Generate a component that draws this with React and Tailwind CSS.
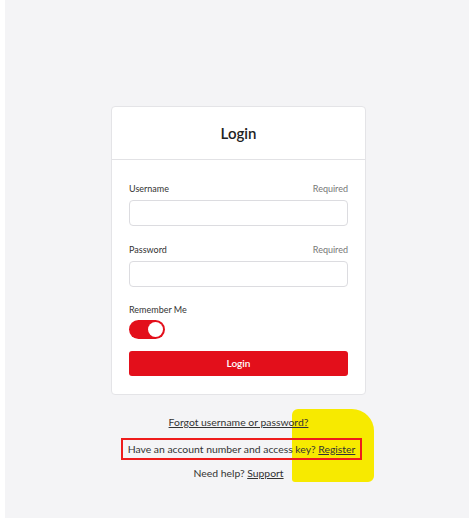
export default function App() {
  return (
    <div className="h-[526px] w-[474px] bg-white font-['Lato',sans-serif]">
      <div className="relative mx-[5px] h-[518px] bg-[#f4f4f6] pt-[106px]">
        <div className="ml-[106px] w-[255px] rounded-[4px] border border-[#e4e4e7] bg-white">
          <div className="flex h-[53px] items-center justify-center border-b border-[#e2e2e5]">
            <h1 className="text-[15px] font-semibold text-[#222]">Login</h1>
          </div>
          <div className="px-[17px] pb-[18px] pt-[23px]">
            <div className="flex items-center justify-between text-[9px] leading-[12px]">
              <span className="text-[#333]">Username</span>
              <span className="text-[#777]">Required</span>
            </div>
            <input className="mt-[5px] block h-[26px] w-full rounded-[4px] border border-[#dcdce0] bg-white" />

            <div className="mt-[18px] flex items-center justify-between text-[9px] leading-[12px]">
              <span className="text-[#333]">Password</span>
              <span className="text-[#777]">Required</span>
            </div>
            <input type="password" className="mt-[5px] block h-[26px] w-full rounded-[4px] border border-[#dcdce0] bg-white" />

            <div className="mt-[17px] text-[9px] leading-[12px] text-[#333]">Remember Me</div>
            <div className="mt-[4px] flex h-[19px] w-[36px] items-center justify-end rounded-full bg-[#e30f1b] pr-[2px]">
              <div className="h-[15px] w-[15px] rounded-full bg-white" />
            </div>

            <button className="mt-[12px] flex h-[25px] w-full items-center justify-center rounded-[3px] bg-[#e30f1b] text-[10px] font-semibold text-white">
              Login
            </button>
          </div>
        </div>

        <div className="absolute left-[287px] top-[409px] h-[73px] w-[82px] rounded-tl-[6px] rounded-tr-[22px] rounded-br-[6px] rounded-bl-[3px] bg-[#f7ea00]" />

        <div className="relative mt-[20px] flex flex-col items-center pl-[3px] text-[10.4px] leading-[15px] text-[#333]">
          <a className="underline">Forgot username or password?</a>
          <div className="ml-[6px] mt-[8px] flex h-[22px] w-[241px] items-center justify-center whitespace-nowrap border-2 border-[#ee1c1c]">
            <span>
              Have an account number and access key? <a className="underline">Register</a>
            </span>
          </div>
          <div className="mt-[6px]">
            Need help? <a className="underline">Support</a>
          </div>
        </div>
      </div>
    </div>
  );
}
